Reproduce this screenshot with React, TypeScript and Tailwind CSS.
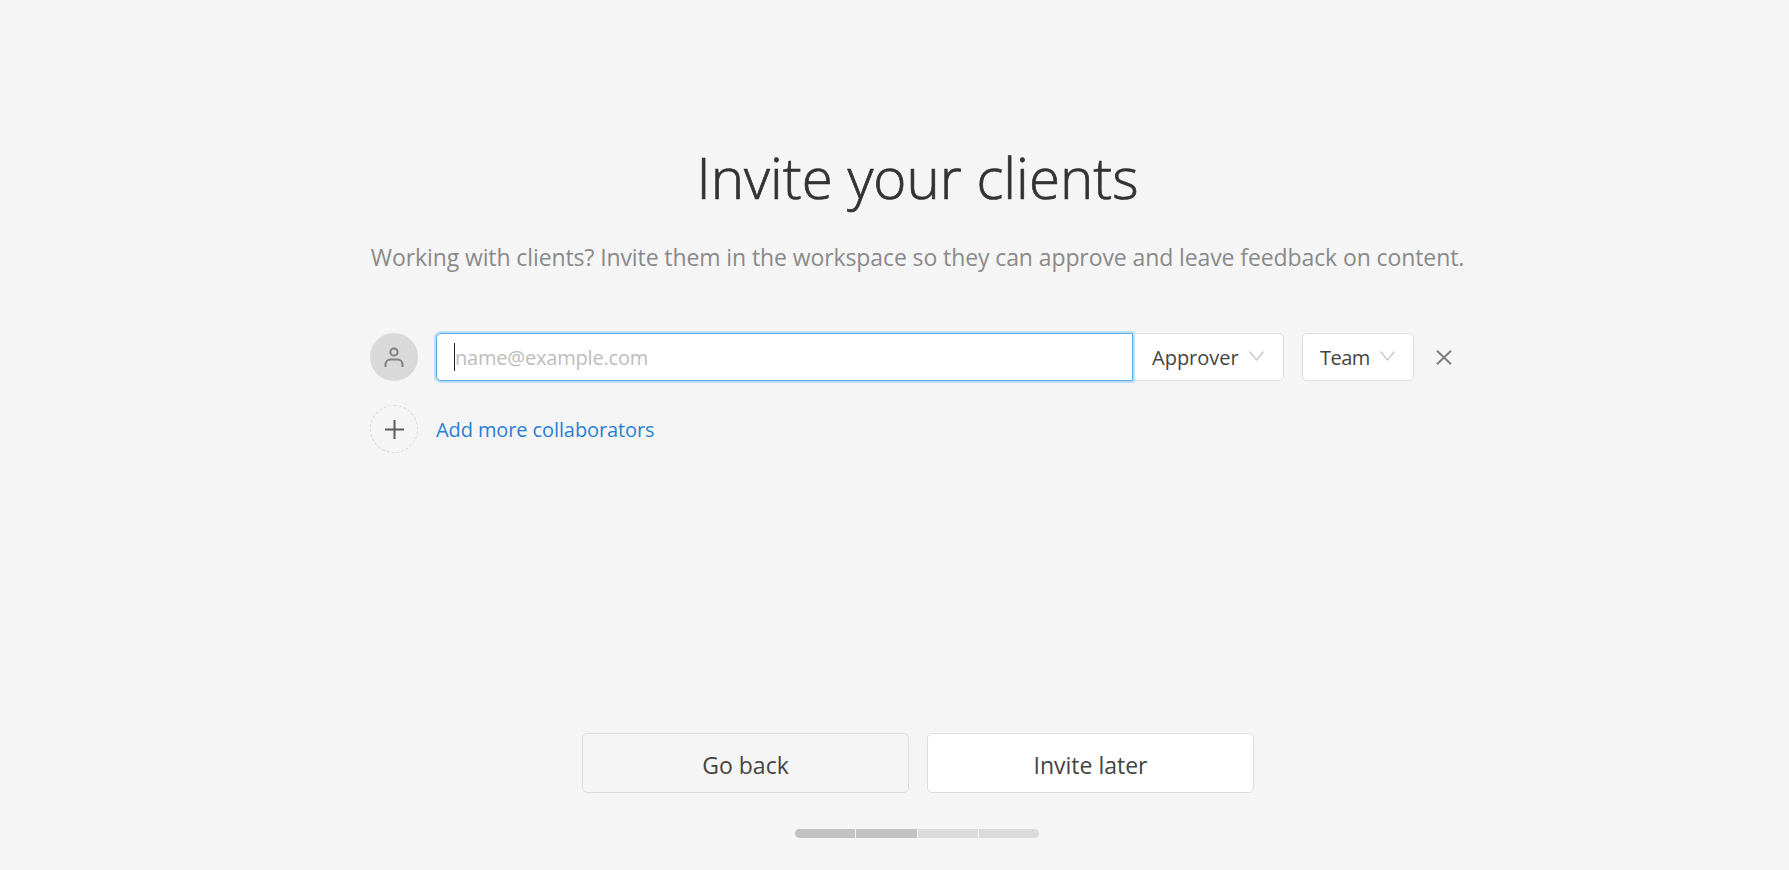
export default function App() {
  return (
    <div className="h-[870px] w-full overflow-hidden bg-[#f5f5f5] font-['Open_Sans',sans-serif] flex flex-col items-start pl-[370px]">
      <div className="w-[1095px] flex flex-col">
        <h1 className="mt-[139px] h-[78px] text-center text-[56.500px] leading-[78px] font-light [-webkit-text-stroke:0.7px_#333333] text-[#333333]">Invite your clients</h1>
        <p className="mt-[23px] h-[34px] text-center text-[23px] leading-[34px] font-normal text-[#8a8a8a] whitespace-nowrap tracking-[-0.1px]">Working with clients? Invite them in the workspace so they can approve and leave feedback on content.</p>
        <div className="mt-[59px] flex items-center h-12">
          <div className="w-12 h-12 rounded-full bg-[#d9d9d9] flex items-center justify-center shrink-0">
            <svg width="20" height="21" viewBox="0 0 20 21" fill="none" stroke="#808080" strokeWidth="2">
              <circle cx="10" cy="5" r="3.600" />
              <path d="M1.500 20v-2.500c0-3 2.200-5 5-5h7c2.800 0 5 2 5 5V20" />
            </svg>
          </div>
          <div className="ml-[18px] w-[697px] h-12 shrink-0 relative z-10 bg-white border border-[#5aa9e0] rounded-l-[5px] rounded-r-[1px] shadow-[0_0_0_2px_#bde0f8] flex items-center pl-[17px]">
            <span className="w-px h-7 bg-[#222222] shrink-0" />
            <span className="pt-[2px] text-[20px] text-[#bdbdbd] leading-none tracking-[-0.2px]">name@example.com</span>
          </div>
          <div className="w-[151px] h-12 shrink-0 bg-white border border-[#dddddd] rounded-r-[5px] flex items-center pl-[18px]">
            <span className="pt-[2px] text-[20px] text-[#444444] leading-none">Approver</span>
            <svg className="ml-[10px] mb-[2px]" width="15" height="10" viewBox="0 0 15 10" fill="none" stroke="#c4c4c4" strokeWidth="1.200"><path d="M.5.5l7 8.500 7-8.500" /></svg>
          </div>
          <div className="ml-[18px] w-[112px] h-12 shrink-0 bg-white border border-[#dddddd] rounded-[5px] flex items-center pl-[17px]">
            <span className="pt-[2px] text-[20px] text-[#444444] leading-none tracking-[-0.5px]">Team</span>
            <svg className="ml-[10px] mb-[2px]" width="15" height="10" viewBox="0 0 15 10" fill="none" stroke="#c4c4c4" strokeWidth="1.200"><path d="M.5.5l7 8.500 7-8.500" /></svg>
          </div>
          <svg className="ml-[22px]" width="16" height="15" viewBox="0 0 16 15" fill="none" stroke="#808080" strokeWidth="2"><path d="M1 .7l14 13.600M15 .7L1 14.300" /></svg>
        </div>
        <div className="mt-6 flex items-center h-12">
          <div className="w-12 h-12 rounded-full border border-dashed border-[#d8d8d8] flex items-center justify-center shrink-0">
            <svg width="19" height="19" viewBox="0 0 19 19" fill="none" stroke="#5c5c5c" strokeWidth="2"><path d="M9.500 0v19M0 9.500h19" /></svg>
          </div>
          <span className="ml-[18px] pt-[2px] text-[20px] text-[#2a7fd5] leading-none tracking-[-0.1px]">Add more collaborators</span>
        </div>
        <div className="mt-[280px] ml-[212px] flex gap-[18px]">
          <button className="w-[327px] h-[60px] rounded-[5px] border border-[#dddddd] bg-[#f5f5f5] text-[23px] pt-[4px] text-[#444444]">Go back</button>
          <button className="w-[327px] h-[60px] rounded-[5px] border border-[#dddddd] bg-white text-[23px] pt-[4px] text-[#444444]">Invite later</button>
        </div>
        <div className="mt-[36px] ml-[425px] w-[244px] h-[9px] flex gap-px rounded-full overflow-hidden">
          <div className="flex-1 bg-[#c2c2c2]" />
          <div className="flex-1 bg-[#c2c2c2]" />
          <div className="flex-1 bg-[#dbdbdb]" />
          <div className="flex-1 bg-[#dbdbdb]" />
        </div>
      </div>
    </div>
  );
}
